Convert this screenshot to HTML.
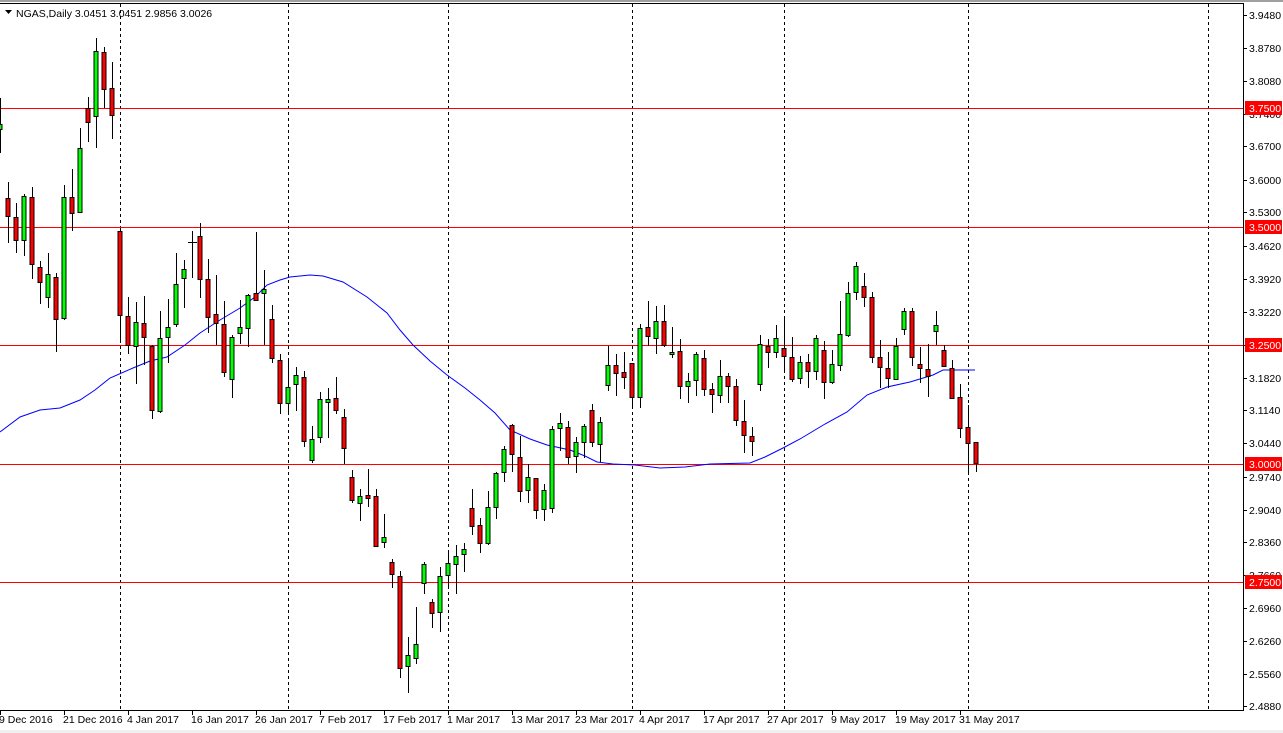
<!DOCTYPE html>
<html><head><meta charset="utf-8"><style>
html,body{margin:0;padding:0;background:#fff;width:1283px;height:733px;overflow:hidden}
svg{display:block}
text{font-family:"Liberation Sans",sans-serif;font-size:10.5px}
</style></head><body>
<svg width="1283" height="733" viewBox="0 0 1283 733" xmlns="http://www.w3.org/2000/svg" shape-rendering="crispEdges">
<rect x="0" y="0" width="1283" height="733" fill="#fff"/>
<rect x="0" y="0" width="1283" height="2" fill="#a0a0a0"/>
<line x1="0" y1="3.5" x2="1244" y2="3.5" stroke="#000"/>
<line x1="1243.5" y1="3" x2="1243.5" y2="711" stroke="#000"/>
<line x1="0" y1="710.5" x2="1244" y2="710.5" stroke="#000"/>
<rect x="0" y="730" width="1283" height="3" fill="#f0f0f0"/>
<!-- dashed verticals -->
<g stroke="#000" stroke-dasharray="3,3">
<line x1="120.5" y1="4" x2="120.5" y2="710"/>
<line x1="288.5" y1="4" x2="288.5" y2="710"/>
<line x1="448.5" y1="4" x2="448.5" y2="710"/>
<line x1="632.5" y1="4" x2="632.5" y2="710"/>
<line x1="784.5" y1="4" x2="784.5" y2="710"/>
<line x1="968.5" y1="4" x2="968.5" y2="710"/>
<line x1="1208.5" y1="4" x2="1208.5" y2="710"/>
</g>
<!-- red horizontal lines -->
<g stroke="#ff0000">
<line x1="0" y1="108.5" x2="1243" y2="108.5"/>
<line x1="0" y1="227.5" x2="1243" y2="227.5"/>
<line x1="0" y1="345.5" x2="1243" y2="345.5"/>
<line x1="0" y1="464.5" x2="1243" y2="464.5"/>
<line x1="0" y1="582.5" x2="1243" y2="582.5"/>
</g>
<!-- MA -->
<polyline fill="none" stroke="#0000ff" stroke-width="1" shape-rendering="auto" points="0,432 20,417 40,410 60,408 80,400 95,390 110,378 133,368 150,361 167,357 185,345 200,333 220,320 240,308 255,297 267,285 280,280 290,277 310,275 323,276 343,282 367,297 387,313 400,330 413,345 430,361 447,375 465,388 480,400 495,413 510,430 530,439 547,445 570,450 585,456 597,462 613,464 635,465 660,468 685,467 710,464 750,463 765,457 783,448 800,439 810,433 825,424 847,412 867,395 887,387 910,382 933,375 943,370 975,370"/>
<!-- wicks -->
<path stroke="#000" fill="none" d="M0.5 98V153M8.5 182V243M16.5 203V253M24.5 194V256M32.5 187V279M40.5 261V304M48.5 253V308M56.5 273V352M64.5 185V320M72.5 169V231M80.5 128V213M88.5 97V142M96.5 38V148M104.5 47V108M112.5 62V139M120.5 228V343M128.5 297V354M136.5 302V384M144.5 296V365M152.5 345V419M160.5 311V413M168.5 299V363M176.5 253V327M184.5 260V308M192.5 231V278M200.5 223V298M208.5 259V333M216.5 275V345M224.5 301V377M232.5 335V398M240.5 300V344M248.5 294V347M256.5 232V300M264.5 270V345M272.5 305V363M280.5 354V414M288.5 358V414M296.5 367V411M304.5 371V447M312.5 426V463M320.5 392V443M328.5 388V438M336.5 377V414M344.5 409V464M352.5 470V503M360.5 489V521M368.5 469V507M376.5 489V546M384.5 514V548M392.5 559V588M400.5 571V678M408.5 637V693M416.5 607V664M424.5 562V594M432.5 599V628M440.5 567V632M448.5 550V588M456.5 545V594M464.5 543V572M472.5 489V535M480.5 518V553M488.5 491V545M496.5 472V519M504.5 446V482M512.5 424V472M520.5 436V502M528.5 464V503M536.5 478V519M544.5 484V521M552.5 426V513M560.5 413V451M568.5 421V464M576.5 437V473M584.5 424V458M592.5 404V447M600.5 417V462M608.5 346V391M616.5 354V396M624.5 352V389M632.5 363V408M640.5 324V408M648.5 301V346M656.5 306V354M664.5 305V347M672.5 327V358M680.5 339V399M688.5 373V403M696.5 352V396M704.5 350V396M712.5 383V413M720.5 360V403M728.5 373V403M736.5 379V426M744.5 400V453M752.5 427V456M760.5 335V391M768.5 339V368M776.5 325V358M784.5 316V372M792.5 337V382M800.5 356V384M808.5 354V388M816.5 335V380M824.5 341V399M832.5 350V384M840.5 301V371M848.5 282V337M856.5 262V300M864.5 273V307M872.5 292V363M880.5 340V388M888.5 352V388M896.5 338V380M904.5 308V335M912.5 308V366M920.5 347V383M928.5 344V397M936.5 311V345M944.5 345V366M952.5 360V399M960.5 384V438M968.5 405V474M976.5 442V472M188 242.5H197"/>
<!-- green bodies -->
<g fill="#00ff00" stroke="#000">
<rect x="-2" y="124.5" width="4" height="5"/>
<rect x="22" y="196.5" width="4" height="44"/>
<rect x="46" y="274.5" width="4" height="23"/>
<rect x="62" y="197.5" width="4" height="121"/>
<rect x="78" y="148.5" width="4" height="64"/>
<rect x="94" y="51.5" width="4" height="65"/>
<rect x="134" y="322.5" width="4" height="24"/>
<rect x="158" y="338.5" width="4" height="73"/>
<rect x="166" y="327.5" width="4" height="10"/>
<rect x="174" y="284.5" width="4" height="40"/>
<rect x="182" y="269.5" width="4" height="9"/>
<rect x="230" y="337.5" width="4" height="42"/>
<rect x="238" y="327.5" width="4" height="6"/>
<rect x="246" y="295.5" width="4" height="33"/>
<rect x="262" y="289.5" width="4" height="4"/>
<rect x="286" y="387.5" width="4" height="16"/>
<rect x="294" y="375.5" width="4" height="9"/>
<rect x="310" y="439.5" width="4" height="21"/>
<rect x="318" y="399.5" width="4" height="38"/>
<rect x="326" y="399.5" width="4" height="3"/>
<rect x="358" y="496.5" width="4" height="7"/>
<rect x="382" y="537.5" width="4" height="5"/>
<rect x="406" y="655.5" width="4" height="11"/>
<rect x="414" y="644.5" width="4" height="14"/>
<rect x="422" y="564.5" width="4" height="19"/>
<rect x="438" y="576.5" width="4" height="36"/>
<rect x="446" y="563.5" width="4" height="12"/>
<rect x="454" y="556.5" width="4" height="8"/>
<rect x="462" y="549.5" width="4" height="5"/>
<rect x="486" y="507.5" width="4" height="36"/>
<rect x="494" y="473.5" width="4" height="34"/>
<rect x="502" y="449.5" width="4" height="23"/>
<rect x="526" y="477.5" width="4" height="13"/>
<rect x="542" y="490.5" width="4" height="19"/>
<rect x="550" y="429.5" width="4" height="79"/>
<rect x="558" y="423.5" width="4" height="5"/>
<rect x="574" y="442.5" width="4" height="14"/>
<rect x="582" y="426.5" width="4" height="16"/>
<rect x="598" y="422.5" width="4" height="22"/>
<rect x="606" y="365.5" width="4" height="20"/>
<rect x="638" y="328.5" width="4" height="69"/>
<rect x="654" y="321.5" width="4" height="17"/>
<rect x="670" y="352.5" width="4" height="2"/>
<rect x="686" y="381.5" width="4" height="5"/>
<rect x="694" y="354.5" width="4" height="26"/>
<rect x="718" y="376.5" width="4" height="19"/>
<rect x="758" y="344.5" width="4" height="40"/>
<rect x="774" y="338.5" width="4" height="14"/>
<rect x="798" y="362.5" width="4" height="16"/>
<rect x="814" y="338.5" width="4" height="33"/>
<rect x="830" y="364.5" width="4" height="18"/>
<rect x="838" y="334.5" width="4" height="31"/>
<rect x="846" y="293.5" width="4" height="42"/>
<rect x="854" y="266.5" width="4" height="26"/>
<rect x="894" y="346.5" width="4" height="33"/>
<rect x="902" y="311.5" width="4" height="18"/>
<rect x="934" y="325.5" width="4" height="6"/>
</g>
<!-- red bodies -->
<g fill="#ff0000" stroke="#000">
<rect x="6" y="198.5" width="4" height="18"/>
<rect x="14" y="217.5" width="4" height="23"/>
<rect x="30" y="197.5" width="4" height="67"/>
<rect x="38" y="267.5" width="4" height="15"/>
<rect x="54" y="277.5" width="4" height="42"/>
<rect x="70" y="197.5" width="4" height="16"/>
<rect x="86" y="108.5" width="4" height="14"/>
<rect x="102" y="52.5" width="4" height="37"/>
<rect x="110" y="88.5" width="4" height="27"/>
<rect x="118" y="231.5" width="4" height="84"/>
<rect x="126" y="316.5" width="4" height="29"/>
<rect x="142" y="323.5" width="4" height="14"/>
<rect x="150" y="346.5" width="4" height="64"/>
<rect x="198" y="236.5" width="4" height="43"/>
<rect x="206" y="279.5" width="4" height="38"/>
<rect x="214" y="314.5" width="4" height="9"/>
<rect x="222" y="324.5" width="4" height="48"/>
<rect x="254" y="293.5" width="4" height="7"/>
<rect x="270" y="319.5" width="4" height="39"/>
<rect x="278" y="360.5" width="4" height="43"/>
<rect x="302" y="377.5" width="4" height="64"/>
<rect x="334" y="398.5" width="4" height="12"/>
<rect x="342" y="417.5" width="4" height="31"/>
<rect x="350" y="477.5" width="4" height="23"/>
<rect x="366" y="495.5" width="4" height="3"/>
<rect x="374" y="496.5" width="4" height="50"/>
<rect x="390" y="562.5" width="4" height="12"/>
<rect x="398" y="576.5" width="4" height="92"/>
<rect x="430" y="602.5" width="4" height="11"/>
<rect x="470" y="508.5" width="4" height="18"/>
<rect x="478" y="525.5" width="4" height="18"/>
<rect x="510" y="425.5" width="4" height="29"/>
<rect x="518" y="457.5" width="4" height="34"/>
<rect x="534" y="478.5" width="4" height="32"/>
<rect x="566" y="427.5" width="4" height="30"/>
<rect x="590" y="410.5" width="4" height="32"/>
<rect x="614" y="365.5" width="4" height="8"/>
<rect x="622" y="372.5" width="4" height="5"/>
<rect x="630" y="363.5" width="4" height="34"/>
<rect x="646" y="327.5" width="4" height="9"/>
<rect x="662" y="321.5" width="4" height="24"/>
<rect x="678" y="351.5" width="4" height="35"/>
<rect x="702" y="358.5" width="4" height="31"/>
<rect x="710" y="389.5" width="4" height="5"/>
<rect x="726" y="376.5" width="4" height="10"/>
<rect x="734" y="386.5" width="4" height="34"/>
<rect x="742" y="421.5" width="4" height="14"/>
<rect x="750" y="436.5" width="4" height="5"/>
<rect x="766" y="346.5" width="4" height="6"/>
<rect x="782" y="348.5" width="4" height="8"/>
<rect x="790" y="357.5" width="4" height="22"/>
<rect x="806" y="362.5" width="4" height="9"/>
<rect x="822" y="350.5" width="4" height="32"/>
<rect x="862" y="286.5" width="4" height="11"/>
<rect x="870" y="297.5" width="4" height="60"/>
<rect x="878" y="357.5" width="4" height="10"/>
<rect x="886" y="368.5" width="4" height="10"/>
<rect x="910" y="311.5" width="4" height="46"/>
<rect x="918" y="364.5" width="4" height="4"/>
<rect x="926" y="369.5" width="4" height="7"/>
<rect x="942" y="350.5" width="4" height="16"/>
<rect x="950" y="368.5" width="4" height="30"/>
<rect x="958" y="397.5" width="4" height="31"/>
<rect x="966" y="427.5" width="4" height="16"/>
<rect x="974" y="442.5" width="4" height="21"/>
</g>
<!-- header -->
<path d="M5 10H12L8.5 14Z" fill="#000" shape-rendering="auto"/>
<text x="16" y="17" fill="#000">NGAS,Daily  3.0451 3.0451 2.9856 3.0026</text>
<!-- price axis ticks -->
<g stroke="#000">
<path d="M1244 15.5h3M1244 48.5h3M1244 81.5h3M1244 114.5h3M1244 146.5h3M1244 180.5h3M1244 212.5h3M1244 246.5h3M1244 279.5h3M1244 312.5h3M1244 345.5h3M1244 378.5h3M1244 410.5h3M1244 443.5h3M1244 477.5h3M1244 510.5h3M1244 542.5h3M1244 575.5h3M1244 608.5h3M1244 641.5h3M1244 674.5h3M1244 706.5h3"/>
</g>
<g fill="#000">
<text x="1249" y="19">3.9480</text>
<text x="1249" y="52">3.8780</text>
<text x="1249" y="85">3.8080</text>
<text x="1249" y="118">3.7400</text>
<text x="1249" y="150">3.6700</text>
<text x="1249" y="184">3.6000</text>
<text x="1249" y="216">3.5300</text>
<text x="1249" y="250">3.4620</text>
<text x="1249" y="283">3.3920</text>
<text x="1249" y="316">3.3220</text>
<text x="1249" y="382">3.1820</text>
<text x="1249" y="414">3.1140</text>
<text x="1249" y="447">3.0440</text>
<text x="1249" y="481">2.9740</text>
<text x="1249" y="514">2.9040</text>
<text x="1249" y="546">2.8360</text>
<text x="1249" y="579">2.7660</text>
<text x="1249" y="612">2.6960</text>
<text x="1249" y="645">2.6260</text>
<text x="1249" y="678">2.5560</text>
<text x="1249" y="710">2.4880</text>
</g>
<g fill="#ff0000">
<rect x="1245" y="101" width="37" height="14"/>
<rect x="1245" y="220" width="37" height="14"/>
<rect x="1245" y="338" width="37" height="14"/>
<rect x="1245" y="457" width="37" height="14"/>
<rect x="1245" y="575" width="37" height="14"/>
</g>
<g fill="#fff">
<text x="1249" y="112">3.7500</text>
<text x="1249" y="231">3.5000</text>
<text x="1249" y="349">3.2500</text>
<text x="1249" y="468">3.0000</text>
<text x="1249" y="586">2.7500</text>
</g>
<!-- time axis -->
<path stroke="#000" d="M0.5 711v4M64.5 711v4M128.5 711v4M192.5 711v4M256.5 711v4M320.5 711v4M384.5 711v4M448.5 711v4M512.5 711v4M576.5 711v4M640.5 711v4M704.5 711v4M768.5 711v4M832.5 711v4M896.5 711v4M960.5 711v4"/>
<g fill="#000">
<text x="-1" y="723">9 Dec 2016</text>
<text x="63" y="723">21 Dec 2016</text>
<text x="127" y="723">4 Jan 2017</text>
<text x="191" y="723">16 Jan 2017</text>
<text x="255" y="723">26 Jan 2017</text>
<text x="319" y="723">7 Feb 2017</text>
<text x="383" y="723">17 Feb 2017</text>
<text x="447" y="723">1 Mar 2017</text>
<text x="511" y="723">13 Mar 2017</text>
<text x="575" y="723">23 Mar 2017</text>
<text x="639" y="723">4 Apr 2017</text>
<text x="703" y="723">17 Apr 2017</text>
<text x="767" y="723">27 Apr 2017</text>
<text x="831" y="723">9 May 2017</text>
<text x="895" y="723">19 May 2017</text>
<text x="959" y="723">31 May 2017</text>
</g>
</svg>
</body></html>
